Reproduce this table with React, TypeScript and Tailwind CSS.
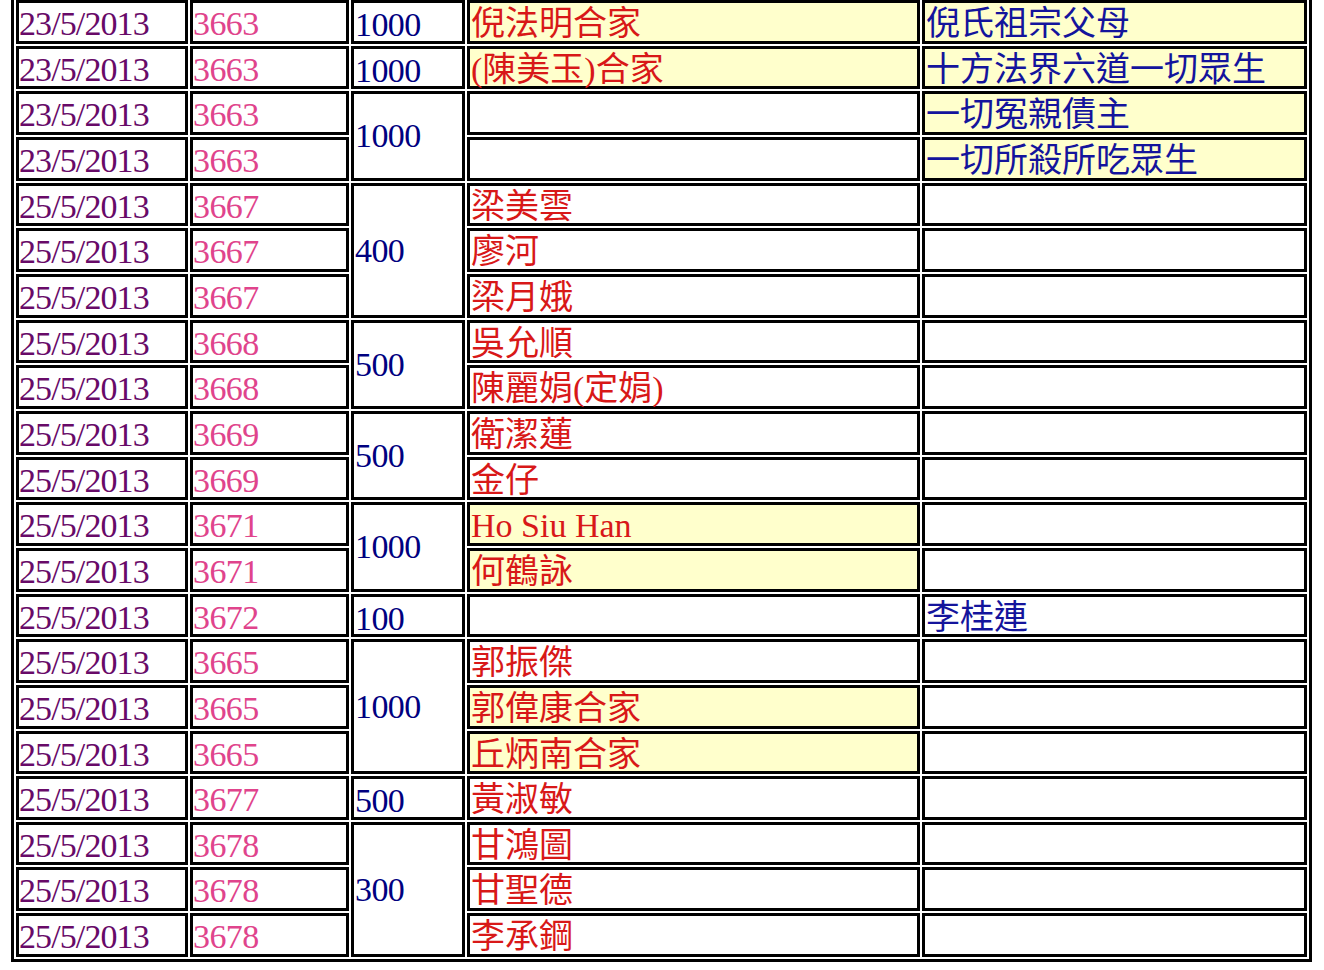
import React from "react";

// 法會登記表（節錄）

type Row = {
  date: string;
  no: string;
  amt?: string;
  span?: 1 | 2 | 3;
  name?: string;
  nameHl?: boolean;
  memo?: string;
  memoHl?: boolean;
};

const rows: Row[] = [
  { date: "23/5/2013", no: "3663", amt: "1000", name: "倪法明合家", nameHl: true, memo: "倪氏祖宗父母", memoHl: true },
  { date: "23/5/2013", no: "3663", amt: "1000", name: "(陳美玉)合家", nameHl: true, memo: "十方法界六道一切眾生", memoHl: true },
  { date: "23/5/2013", no: "3663", amt: "1000", span: 2, memo: "一切冤親債主", memoHl: true },
  { date: "23/5/2013", no: "3663", memo: "一切所殺所吃眾生", memoHl: true },
  { date: "25/5/2013", no: "3667", amt: "400", span: 3, name: "梁美雲" },
  { date: "25/5/2013", no: "3667", name: "廖河" },
  { date: "25/5/2013", no: "3667", name: "梁月娥" },
  { date: "25/5/2013", no: "3668", amt: "500", span: 2, name: "吳允順" },
  { date: "25/5/2013", no: "3668", name: "陳麗娟(定娟)" },
  { date: "25/5/2013", no: "3669", amt: "500", span: 2, name: "衛潔蓮" },
  { date: "25/5/2013", no: "3669", name: "金仔" },
  { date: "25/5/2013", no: "3671", amt: "1000", span: 2, name: "Ho Siu Han", nameHl: true },
  { date: "25/5/2013", no: "3671", name: "何鶴詠", nameHl: true },
  { date: "25/5/2013", no: "3672", amt: "100", memo: "李桂連" },
  { date: "25/5/2013", no: "3665", amt: "1000", span: 3, name: "郭振傑" },
  { date: "25/5/2013", no: "3665", name: "郭偉康合家", nameHl: true },
  { date: "25/5/2013", no: "3665", name: "丘炳南合家", nameHl: true },
  { date: "25/5/2013", no: "3677", amt: "500", name: "黃淑敏" },
  { date: "25/5/2013", no: "3678", amt: "300", span: 3, name: "甘鴻圖" },
  { date: "25/5/2013", no: "3678", name: "甘聖德" },
  { date: "25/5/2013", no: "3678", name: "李承鋼" },
];

const spanClass: Record<number, string> = {
  1: "pt-[6px]",
  2: "row-span-2 flex items-center",
  3: "row-span-3 flex items-center",
};

const cell = "border-[3px] border-black whitespace-nowrap leading-[31px] overflow-visible";

export default function App() {
  return (
    <div className="min-h-[970px] bg-white">
      <div className="-mt-[5px] ml-[11px] w-fit border-[3px] border-black p-[2px] font-['Liberation_Serif','Noto_Sans_CJK_TC',serif] text-[34px]">
        <div className="grid grid-cols-[172px_159px_114px_453px_385px] grid-rows-[repeat(21,43.67px)] gap-[2px]">
          {rows.map((r, i) => (
            <React.Fragment key={i}>
              <div className={`${cell} pt-[5px] tracking-[-0.9px] text-[#680a68]`}>{r.date}</div>
              <div className={`${cell} pt-[5px] tracking-[-0.6px] text-[#e0448c]`}>{r.no}</div>
              {r.amt !== undefined && (
                <div className={`${cell} ${spanClass[r.span ?? 1]} pl-[1px] tracking-[-0.6px] text-[#000080]`}>
                  {r.amt}
                </div>
              )}
              <div
                className={`${cell} pt-[5px] pl-[1px] text-[#d81818] ${r.nameHl ? "bg-[#ffffcc]" : "bg-white"}`}
              >
                {r.name ?? ""}
              </div>
              <div
                className={`${cell} pt-[5px] pl-[1px] text-[#14149c] ${r.memoHl ? "bg-[#ffffcc]" : "bg-white"}`}
              >
                {r.memo ?? ""}
              </div>
            </React.Fragment>
          ))}
        </div>
      </div>
    </div>
  );
}
